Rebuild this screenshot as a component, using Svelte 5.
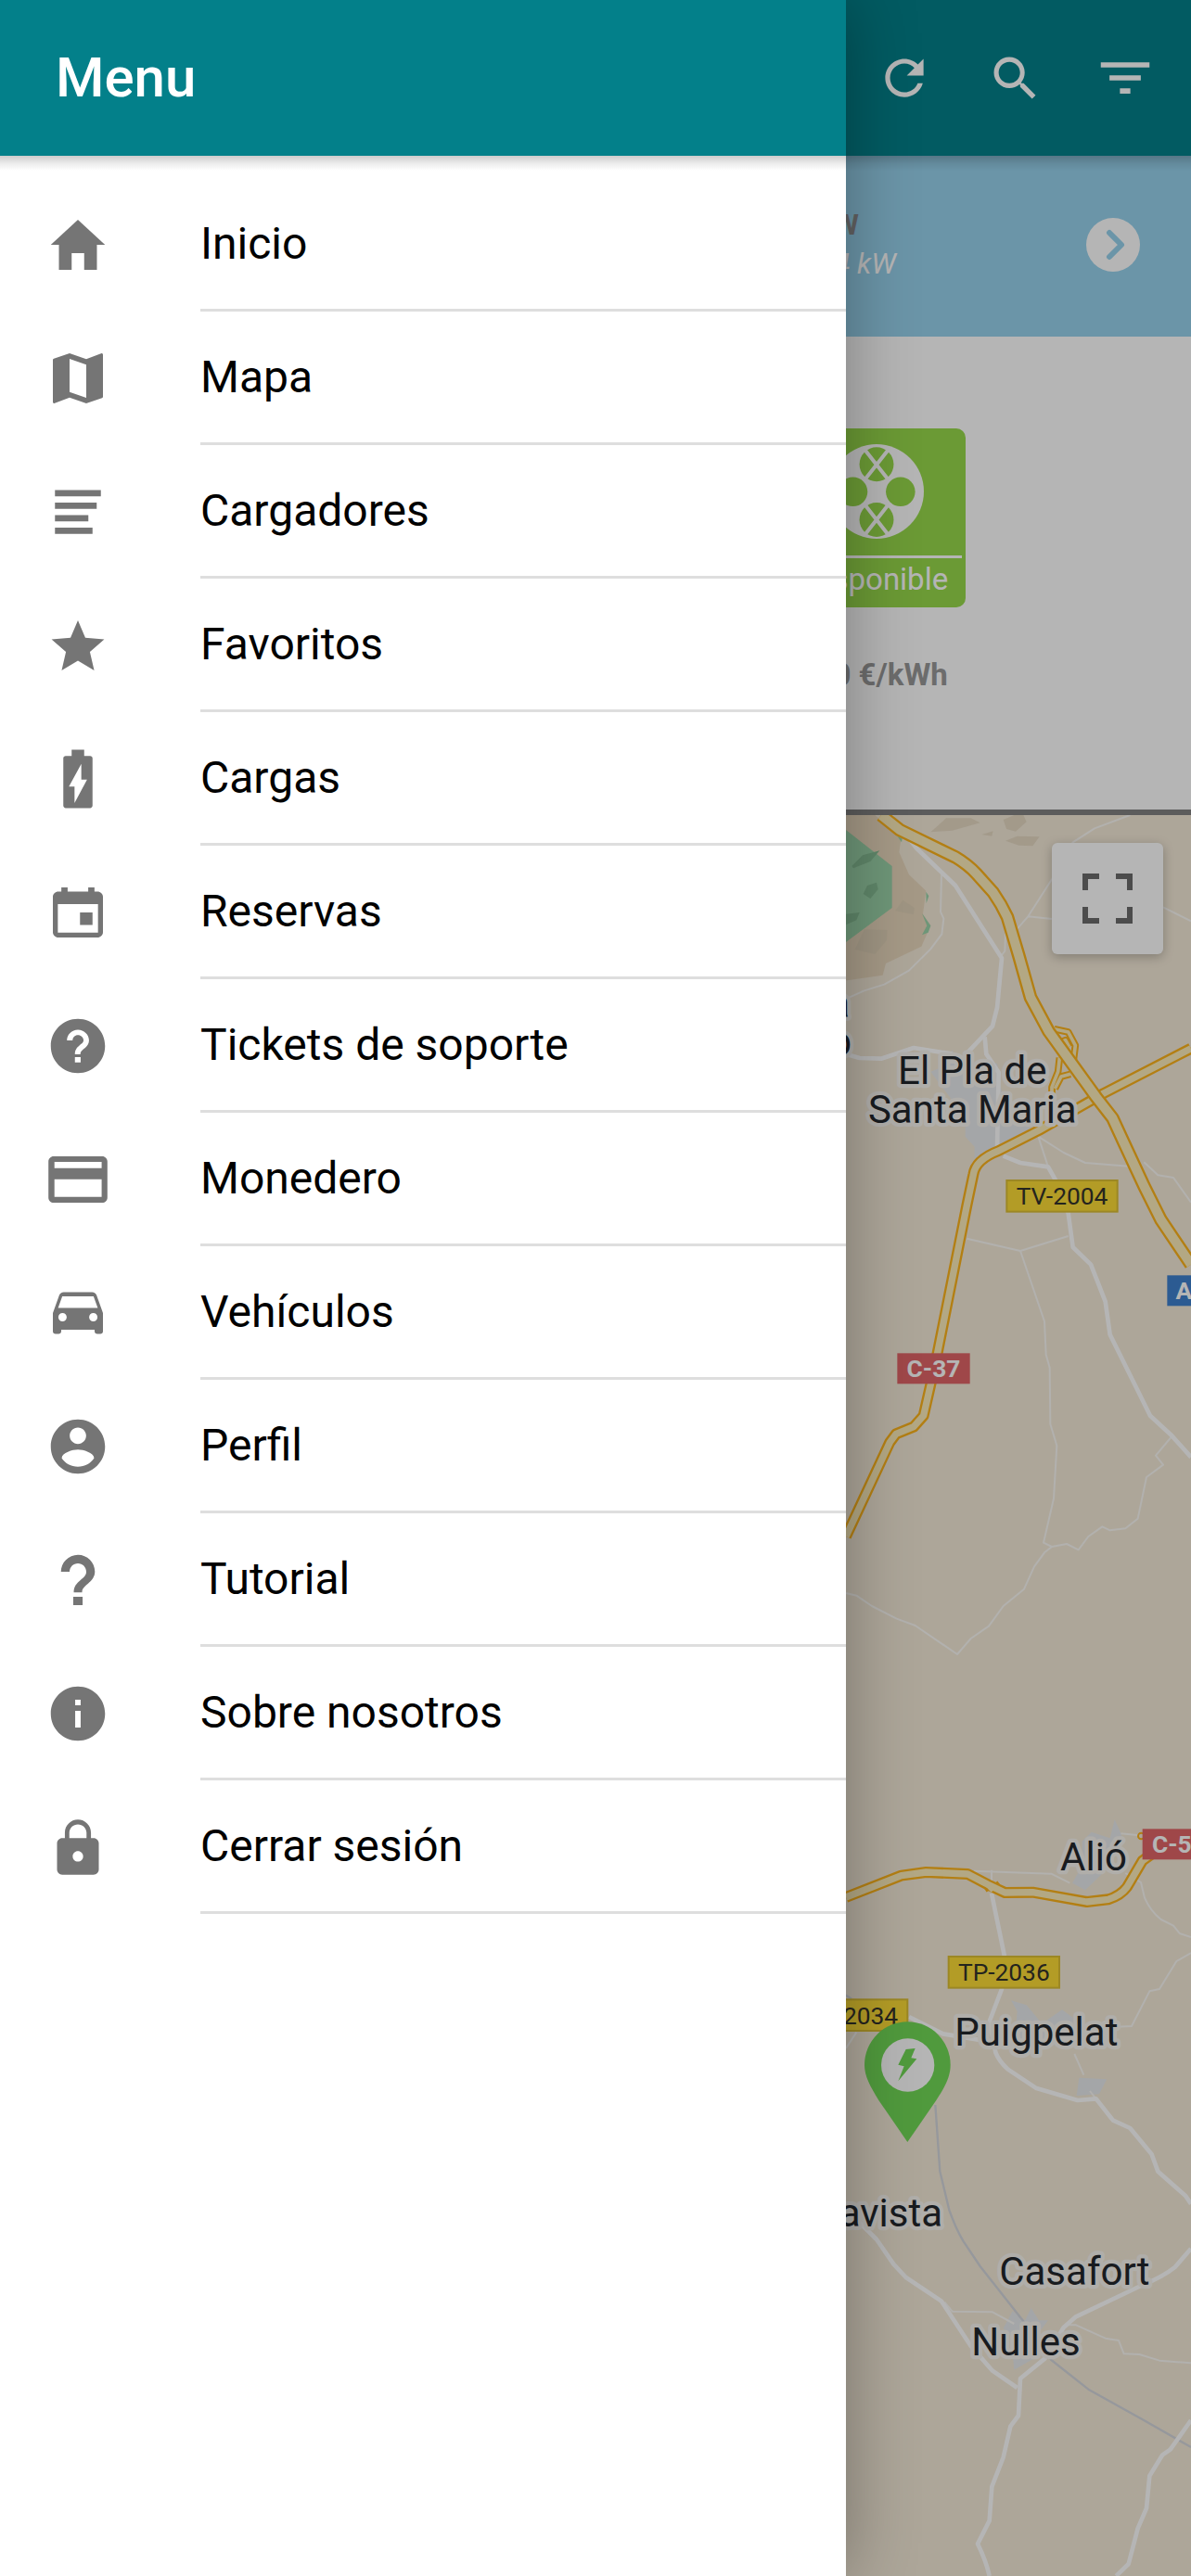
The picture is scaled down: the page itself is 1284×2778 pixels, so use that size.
<script lang="ts">
    interface MenuItem {
        label: string;
        icon: string;
    }

    let isMenuOpen = $state(true);

    // Icons are drawn on a 512 grid, holes are cut with evenodd
    const items: MenuItem[] = [
        {
            label: "Inicio",
            icon: "M208 448V320h96v128h97.6V256H464L256 64 48 256h62.4v192z",
        },
        {
            label: "Mapa",
            icon: "M437.3 64c-2.2 0-4.4 1.4-9.2 3.2L320 108.8 192 64 71.5 104.5c-4.3 1.1-7.5 5.4-7.5 10.7v322.1c0 6.4 4.3 10.7 10.7 10.7 1.8 0 6.5-2.3 9-3.3L192 403.2 320 448l120.5-40.5c4.3-1.1 7.5-5.4 7.5-10.7V74.7c0-6.4-4.3-10.7-10.7-10.7zM320 405.3l-128-44.8V106.7l128 44.8z",
        },
        {
            label: "Cargadores",
            icon: "M80 88h352v48H80zM80 184h320v48H80zM80 280h256v48H80zM80 376h288v48H80z",
        },
        {
            label: "Favoritos",
            icon: "M256 372.7L380.8 448l-33-142.1 110.2-95.5-145.3-12.5L256 64l-56.7 133.9L54 210.4l110.2 95.5L131.2 448z",
        },
        {
            label: "Cargas",
            icon: "M349.4 80H304V32h-96v48h-45.4C152 80 144 88 144 98.4v362.8c0 9.8 8 18.8 18.6 18.8h186.8c10.6 0 18.6-9 18.6-18.8V98.4c0-10.4-8-18.4-18.6-18.4zM230 440V314h-43l95-174v122h44z",
        },
        {
            label: "Reservas",
            icon: "M368 256h-96v96h96zM335 64v32H177V64h-48v32h-23c-23 0-42 18-42 41v270c0 23 19 41 42 41h300c23 0 42-18 42-41V137c0-23-19-41-42-41h-23V64zM410 410H102V192h308z",
        },
        {
            label: "Tickets de soporte",
            icon: "M256 48C141 48 48 141 48 256s93 208 208 208 208-93 208-208S371 48 256 48zM277 382h-44v-41h44zM172 214c0-45 38-82 84-82s85 37 85 82c0 24-12 40-26 53-22 20-40 28-40 53h-42c0-35 14-50 34-68 16-14 32-20 32-40 0-22-20-40-43-40s-41 18-41 42z",
        },
        {
            label: "Monedero",
            icon: "M70 78h372c22 0 40 18 40 40v276c0 22-18 40-40 40H70c-22 0-40-18-40-40V118c0-22 18-40 40-40zM76 121v47h362v-47zM76 254v135h362V254z",
        },
        {
            label: "Vehículos",
            icon: "M399 119c-5-14-18-23-34-23H147c-16 0-29 9-34 23L64 256v140c0 12 9 20 20 20h24c11 0 20-8 20-20v-12h256v12c0 12 9 20 20 20h24c11 0 20-8 20-20V256zM138 320c-18 0-32-14-32-32s14-32 32-32 32 14 32 32-14 32-32 32zM374 320c-18 0-32-14-32-32s14-32 32-32 32 14 32 32-14 32-32 32zM104 216l32-88h240l32 88z",
        },
        {
            label: "Perfil",
            icon: "M256 48C141 48 48 141 48 256s93 208 208 208 208-93 208-208S371 48 256 48zM256 110c35 0 63 28 63 63s-28 63-63 63-63-28-63-63 28-63 63-63zM256 410c-52 0-98-26-124-66 1-41 84-65 124-65s123 24 124 65c-26 40-72 66-124 66z",
        },
        {
            label: "Tutorial",
            icon: "M126 192C126 121 185 62 256 62s130 58 130 129c0 40-22 66-52 92-32 28-46 38-46 68h-64c0-48 22-70 50-94 26-22 46-36 46-65 0-36-29-64-64-64s-64 28-64 64zM220 384h72v64h-72z",
        },
        {
            label: "Sobre nosotros",
            icon: "M256 48C141 48 48 141 48 256s93 208 208 208 208-93 208-208S371 48 256 48zM277 363h-42V235h42zM277 192h-42v-43h42z",
        },
        {
            label: "Cerrar sesión",
            icon: "M376 187h-20v-42c0-55-45-100-100-100s-100 45-100 100v42h-20c-22 0-40 18-40 40v200c0 22 18 40 40 40h240c22 0 40-18 40-40V227c0-22-18-40-40-40zM256 367c-22 0-40-18-40-40s18-40 40-40 40 18 40 40-18 40-40 40zM322 187H190v-42c0-36 30-64 66-64s66 28 66 64z",
        },
    ];

    const actions = [
        {
            label: "Actualizar",
            icon: "M256 388c-72.6 0-132-59.4-132-132s59.4-132 132-132c36.3 0 69.3 15.4 92.4 39.6L278 234h154V80l-51.7 51.7C348.4 99.8 304.4 80 256 80c-96.8 0-176 79.2-176 176s78.1 176 176 176c81 0 148.3-54.1 169.4-128h-46.5c-18.8 49.6-67.2 84-122.9 84z",
        },
        {
            label: "Buscar",
            icon: "M337.5 305.4H320l-6.6-5.5c20.8-25.2 34-57 34-93.3C347.4 127.6 283.9 64 205.1 64 127.5 64 64 127.6 64 206.6s63.5 142.7 142.2 142.7c35 0 67.8-13.2 93-34l6.6 5.4v17.6L415.2 448l32.8-33zM206.2 305.4c-54.7 0-98.4-43.9-98.4-98.8s43.7-98.7 98.4-98.7 98.5 43.9 98.5 98.7-43.8 98.8-98.5 98.8z",
        },
        {
            label: "Filtrar",
            icon: "M208 400h96v-48h-96zM32 112v48h448v-48zM112 280h288v-48H112z",
        },
    ];

    const highways = [
        "M210 0L270 48 450 136Q490 160 518 190L572 250Q600 290 618 330L655 455 693 590 752 700 905 912 958 980 995 1060 1060 1200 1115 1310 1212 1454",
    ];

    const mainRoads = [
        "M1212 755L930 900 860 940 720 1020 590 1086Q515 1115 508 1163L487 1263 392 1740 370 1842 347 1943 315 1979 258 2002 238 2029 96 2334",
        "M96 3501L275 3431 355 3420 490 3426 555 3460 610 3486 700 3485 875 3516 945 3508Q985 3495 1005 3468L1055 3383 1110 3343",
    ];

    const ramps = [
        "M770 692L815 702 838 745 832 792",
        "M790 735L806 728 818 750",
        "M787 785L782 830 762 880 762 925",
        "M822 838L792 846 772 885",
    ];

    const roads = [
        "M240 0L325 108 450 228 600 463 585 623 570 683 485 773",
        "M545 718L550 773 590 833 585 1080",
        "M96 773L140 786 210 788 315 753 440 773",
        "M605 1103L660 1125 750 1138 775 1183 815 1288 830 1398 888 1454 935 1574 950 1681 1030 1842 1080 1943 1150 2008 1212 2077",
        "M567 3488L608 3688 600 3798 560 3903 580 4003Q590 4030 620 4058L710 4118 845 4158 905 4153 960 4223 1015 4248 1085 4333 1105 4388 1195 4468 1212 4493",
        "M300 3888L410 3943 560 3968",
        "M96 4510L195 4608 250 4688 290 4731 405 4808 500 4953 570 5033 650 5088",
        "M1212 4638L1160 4698Q1120 4730 1050 4758L840 4858 800 4893 740 4993 660 5058 654 5178 628 5213 605 5313 568 5408 560 5518 522 5593Q550 5650 560 5697",
        "M1212 5193L1145 5288 1120 5305 1078 5373 1068 5478 1040 5543 1010 5658 970 5697",
    ];

    const lanes = [
        "M405 193L402 313 412 335 406 385 370 433 300 503 220 548 155 568 100 593",
        "M612 383L610 440 600 453",
        "M1015 0L900 43 830 88 762 208 685 328 650 368M685 328L762 336",
        "M1122 298L1212 343",
        "M750 1138L718 1040 800 1092 870 1125 1010 1136M1060 1123L1105 1165 1155 1173 1212 1253",
        "M487 1370L660 1410 815 1362",
        "M660 1410L738 1638 743 1745 755 1788 757 1970 778 2040 768 2211 735 2354 762 2367 810 2358 848 2377 880 2334 925 2302 950 2314 1000 2308 1040 2276 1068 2142 1122 2102 1098 2072 1150 2010",
        "M762 2367L738 2386 705 2431 672 2504 605 2559 558 2624 500 2664 456 2715 320 2622 260 2600 180 2559 130 2525 96 2517",
        "M510 3416L760 3425 820 3455M567 3413V3460",
        "M985 3295L1045 3301",
        "M1000 3423L1050 3453 1062 3503Q1080 3545 1115 3573L1155 3593 1175 3618 1212 3630",
        "M1212 3681L1165 3708 1110 3798 1078 3805 1020 3918 960 3921",
        "M835 4008L865 4076M885 4128L905 4153",
        "M415 4811L440 4841 570 4843 640 4881",
        "M810 4885H840L935 4928 978 4935 995 4978 1045 4980 1110 5000 1212 5008",
        "M96 3990L130 3938",
    ];

    const towns = [
        "M370 830L420 810 440 760 460 803 585 803 600 900 660 980 705 1028 590 1073 512 1113 512 1073 482 1040 482 980 425 903Z",
        "M890 3290L950 3310 965 3250 988 3300 960 3370 920 3430 870 3478 828 3455 860 3400 860 3320Z",
        "M630 3835L680 3850 730 3910 795 3865 830 3890 830 3980 640 3980 650 3870Z",
        "M850 4085L940 4090 915 4138 842 4143Z",
        "M635 4840L675 4870 695 4830 720 4870 750 4870 720 4910 710 4990 640 5030 630 4920 605 4895Z",
    ];

    const places = [
        { name: "El Pla de", x: 505, y: 871, anchor: "middle" },
        { name: "Santa Maria", x: 505, y: 997, anchor: "middle" },
        { name: "Cabra", x: 108, y: 655, anchor: "end" },
        { name: "del Camp", x: 114, y: 778, anchor: "end" },
        { name: "Alió", x: 897, y: 3415, anchor: "middle" },
        { name: "Puigpelat", x: 712, y: 3980, anchor: "middle" },
        { name: "Bellavista", x: 408, y: 4565, anchor: "end" },
        { name: "Casafort", x: 835, y: 4754, anchor: "middle" },
        { name: "Nulles", x: 678, y: 4983, anchor: "middle" },
    ];

    const shields = [
        { name: "TV-2004", kind: "local", x: 616, y: 1182, w: 358, h: 101 },
        { name: "C-37", kind: "regional", x: 262, y: 1741, w: 235, h: 99 },
        { name: "A-2", kind: "national", x: 1135, y: 1489, w: 184, h: 99 },
        { name: "C-51", kind: "regional", x: 1055, y: 3280, w: 235, h: 99 },
        { name: "TP-2036", kind: "local", x: 428, y: 3693, w: 358, h: 101 },
        { name: "TP-2034", kind: "local", x: -63, y: 3832, w: 358, h: 101 },
    ];

    function closeMenu() {
        isMenuOpen = false;
    }
</script>

<div class="app">
    <main class="page">
        <header class="toolbar page-toolbar">
            {#each actions as action}
                <button class="action" aria-label={action.label}>
                    <svg viewBox="0 0 512 512" fill-rule="evenodd">
                        <path d={action.icon} />
                    </svg>
                </button>
            {/each}
        </header>

        <section class="banner">
            <div class="power">
                <strong>22 kW</strong>
                <em>7.4 kW</em>
            </div>
            <button class="next" aria-label="Siguiente">
                <svg viewBox="0 0 58 58">
                    <circle cx="29" cy="29" r="29" />
                    <path d="M25 16L38 29 25 42" />
                </svg>
            </button>
        </section>

        <section class="connectors">
            <div class="connector">
                <div class="card">
                    <svg class="plug" viewBox="0 0 304 304">
                        <circle class="plate" cx="152" cy="152" r="152" />
                        <circle cx="76" cy="153" r="47" />
                        <circle cx="229" cy="153" r="47" />
                        <circle cx="152" cy="65" r="55" />
                        <circle cx="152" cy="243" r="55" />
                        <path d="M116 20L188 112M188 20L116 112" />
                        <path d="M116 197L188 289M188 197L116 289" />
                    </svg>
                    <span class="status">Disponible</span>
                </div>
                <strong class="price">0.30 €/kWh</strong>
            </div>
        </section>

        <section class="map">
            <svg class="map-canvas" viewBox="0 0 1212 5697">
                <path
                    class="hill"
                    d="M0 0H190L275 73 268 120 300 193 355 245 345 320 370 358 340 425 225 480 215 518 100 535H0Z"
                />
                <path class="forest" d="M0 -20L96 48 245 165V300L96 411 0 470Z" />
                <path
                    class="forest"
                    d="M342 318L370 358 362 380 342 388 358 358ZM355 248L364 262 356 285ZM262 68L278 76 276 88Z"
                />
                <path
                    class="forest-shade"
                    d="M115 165L150 130 205 115 175 150 120 172ZM152 255L165 228 195 218 200 240 175 270ZM96 320L140 315 130 340 96 355Z"
                />
                <path
                    class="hill-shade"
                    d="M155 370L230 372 228 405 190 450 125 435ZM255 310L280 275 318 300 315 322ZM605 15L640 0 670 0 680 22 645 53 615 45ZM612 83L650 68 722 70 700 100 655 98ZM370 55L420 10 500 10 530 25 440 50ZM535 63L572 52 568 68Z"
                />
                {#each towns as d}
                    <path class="town" {d} />
                {/each}
                <path
                    class="rail"
                    d="M385 4173L392 4273 400 4388 430 4513Q450 4570 475 4613L530 4695 670 4873 760 4998 880 5093 1050 5188 1212 5280M96 3818L115 3830"
                />
                {#each lanes as d}
                    <path class="lane" {d} />
                {/each}
                {#each roads as d}
                    <path class="road" {d} />
                {/each}
                {#each ramps as d}
                    <path class="ramp casing" {d} />
                {/each}
                {#each ramps as d}
                    <path class="ramp" {d} />
                {/each}
                <circle class="junction casing" cx="1051" cy="3303" r="10" />
                <path class="main casing" d="M558 3462L566 3475M572 3460L580 3470" />
                {#each mainRoads as d}
                    <path class="main casing" {d} />
                {/each}
                {#each mainRoads as d}
                    <path class="main" {d} />
                {/each}
                <path class="main" d="M562 3465L574 3478" />
                {#each highways as d}
                    <path class="highway casing" {d} />
                    <path class="highway" {d} />
                {/each}
                {#each shields as shield}
                    <g class="shield {shield.kind}">
                        <rect
                            x={shield.x}
                            y={shield.y}
                            width={shield.w}
                            height={shield.h}
                        />
                        <text
                            x={shield.x + shield.w / 2}
                            y={shield.y + shield.h / 2 + 28}
                            text-anchor="middle">{shield.name}</text
                        >
                    </g>
                {/each}
                {#each places as place}
                    <text
                        class="place"
                        x={place.x}
                        y={place.y}
                        text-anchor={place.anchor}>{place.name}</text
                    >
                {/each}
                <g class="pin">
                    <path
                        d="M295 4293L388 4158C418 4112 434 4080 434 4043A139 139 0 0 0 156 4043C156 4080 174 4112 202 4158Z"
                    />
                    <circle cx="296" cy="4044" r="86" />
                    <path
                        d="M290 3993L320 3990 307 4021 325 4024 265 4096 284 4048 265 4043Z"
                    />
                </g>
            </svg>
            <button class="fullscreen" aria-label="Pantalla completa">
                <svg viewBox="0 0 18 18">
                    <path
                        d="M0 0v6h2V2h4V0zM12 0v2h4v4h2V0zM0 12v6h6v-2H2v-4zM16 12v4h-4v2h6v-6z"
                    />
                </svg>
            </button>
        </section>
    </main>

    {#if isMenuOpen}
        <button class="backdrop" onclick={closeMenu} aria-label="Cerrar menú"
        ></button>
        <aside class="menu">
            <header class="toolbar menu-toolbar">
                <h1>Menu</h1>
            </header>
            <nav>
                {#each items as item}
                    <a class="item" href="#top">
                        <svg viewBox="0 0 512 512" fill-rule="evenodd">
                            <path d={item.icon} />
                        </svg>
                        <span class="label">{item.label}</span>
                    </a>
                {/each}
            </nav>
        </aside>
    {/if}
</div>

<style>
    :global(body) {
        margin: 0;
        background: #fff;
    }

    .app {
        position: relative;
        min-height: 100vh;
        overflow: hidden;
        font-family: Roboto, "Noto Sans", sans-serif;
        color: #000;
    }

    button {
        padding: 0;
        border: none;
        background: none;
        cursor: pointer;
    }
    svg {
        display: block;
    }

    .page {
        display: flex;
        flex-direction: column;
        min-height: 100vh;
    }

    .toolbar {
        position: relative;
        z-index: 1;
        display: flex;
        align-items: center;
        box-sizing: border-box;
        height: 168px;
        background: #03808a;
    }
    .toolbar::after {
        content: "";
        position: absolute;
        top: 100%;
        left: 0;
        right: 0;
        height: 16px;
        background: linear-gradient(
            rgba(0, 0, 0, 0.2),
            rgba(0, 0, 0, 0.08) 50%,
            rgba(0, 0, 0, 0)
        );
        pointer-events: none;
    }
    .page-toolbar {
        justify-content: flex-end;
        gap: 59px;
        padding: 0 41px;
    }

    .action svg {
        width: 60px;
        height: 60px;
        fill: #fff;
    }

    .banner {
        display: flex;
        align-items: center;
        justify-content: flex-end;
        gap: 205px;
        box-sizing: border-box;
        height: 195px;
        padding: 0 55px 4px;
        background: #97d2ed;
    }
    .power {
        display: flex;
        flex-direction: column;
        align-items: flex-end;
        font-size: 31px;
        line-height: 42px;
    }
    .power strong {
        padding-right: 40px;
        color: #8b8b8b;
    }
    .power em {
        color: #fff;
    }
    .next svg {
        width: 58px;
        height: 58px;
    }
    .next circle {
        fill: #fff;
    }
    .next path {
        fill: none;
        stroke: #97d2ed;
        stroke-width: 6;
        stroke-linecap: round;
        stroke-linejoin: round;
    }

    .connectors {
        display: flex;
        justify-content: flex-end;
        box-sizing: border-box;
        height: 516px;
        padding: 99px 243px 0;
        border-bottom: 6px solid #828282;
        background: #fff;
    }
    .connector {
        display: flex;
        flex-direction: column;
        gap: 52px;
        width: 192px;
    }
    .card {
        display: flex;
        flex-direction: column;
        align-items: center;
        gap: 18px;
        box-sizing: border-box;
        height: 193px;
        padding: 17px 4px 0;
        border-radius: 10px;
        background: #97da4b;
    }
    .plug {
        width: 102px;
        height: 102px;
        fill: #97da4b;
    }
    .plug .plate {
        fill: #fff;
    }
    .plug path {
        fill: none;
        stroke: #fff;
        stroke-width: 12;
    }
    .status {
        width: 100%;
        border-top: 3px solid #fff;
        color: #fff;
        font-size: 33px;
        line-height: 46px;
        text-align: center;
    }
    .price {
        color: #989898;
        font-size: 33px;
        line-height: 42px;
        text-indent: 2px;
        white-space: nowrap;
    }

    .map {
        position: relative;
        flex: 1;
        min-height: 600px;
        overflow: hidden;
        background: #f4ead8;
    }
    .map-canvas {
        position: absolute;
        top: 0;
        right: 0;
        width: 404px;
        height: 1899px;
    }
    .map-canvas path {
        stroke-linejoin: round;
    }

    .hill {
        fill: #e9d8bd;
    }
    .hill-shade {
        fill: #dccfb6;
        opacity: 0.6;
    }
    .forest {
        fill: #9bd3a9;
    }
    .forest-shade {
        fill: #87bd94;
    }
    .town {
        fill: #e8eaed;
    }
    .rail,
    .lane,
    .road,
    .ramp,
    .main,
    .highway,
    .junction {
        fill: none;
        stroke: #fdedba;
    }
    .rail {
        stroke: #d3d6dc;
        stroke-width: 7;
    }
    .lane {
        stroke: #fbf9f5;
        stroke-width: 6;
    }
    .road {
        stroke: #fff;
        stroke-width: 14;
    }
    .ramp {
        stroke-width: 11;
    }
    .ramp.casing {
        stroke-width: 23;
    }
    .junction {
        stroke-width: 6;
    }
    .main {
        stroke-width: 22;
    }
    .main.casing {
        stroke-width: 36;
    }
    .highway {
        stroke-width: 30;
    }
    .highway.casing {
        stroke-width: 44;
    }
    .casing {
        stroke: #fdb31c;
    }

    .shield text {
        font-size: 79px;
    }
    .local rect {
        fill: #fddc36;
        stroke: #dcbf34;
        stroke-width: 6;
    }
    .local text {
        fill: #33332b;
    }
    .regional rect {
        fill: #e16568;
    }
    .national rect {
        fill: #3f80ce;
    }
    .regional text,
    .national text {
        fill: #fff;
        font-weight: 700;
    }

    .place {
        fill: #23272d;
        stroke: #f8f5f0;
        stroke-width: 26;
        stroke-linejoin: round;
        paint-order: stroke;
        font-size: 126px;
    }

    .pin path {
        fill: #71d957;
    }
    .pin circle {
        fill: #fff;
    }

    .fullscreen {
        position: absolute;
        top: 30px;
        right: 30px;
        display: flex;
        align-items: center;
        justify-content: center;
        width: 120px;
        height: 120px;
        border-radius: 6px;
        background: #fff;
        box-shadow: 0 3px 12px rgba(0, 0, 0, 0.25);
    }
    .fullscreen svg {
        width: 54px;
        height: 54px;
        fill: #6b6b6b;
    }

    .backdrop {
        position: absolute;
        inset: 0;
        z-index: 2;
        width: 100%;
        background: rgba(0, 0, 0, 0.29);
    }

    .menu {
        position: absolute;
        top: 0;
        bottom: 0;
        left: 0;
        z-index: 3;
        width: 912px;
        max-width: 85vw;
        background: #fff;
        box-shadow: 0 0 72px rgba(0, 0, 0, 0.32);
    }
    .menu-toolbar {
        padding: 0 60px;
    }
    h1 {
        margin: 0;
        color: #fff;
        font-size: 60px;
        font-weight: 500;
        line-height: 72px;
    }

    nav {
        padding: 24px 0;
    }
    .item {
        display: flex;
        align-items: center;
        gap: 96px;
        height: 144px;
        padding-left: 48px;
        color: #000;
        text-decoration: none;
    }
    .item svg {
        flex: none;
        width: 72px;
        height: 72px;
        fill: #757575;
    }
    .label {
        flex: 1;
        border-bottom: 3px solid #dedede;
        font-size: 48px;
        line-height: 141px;
    }
</style>
